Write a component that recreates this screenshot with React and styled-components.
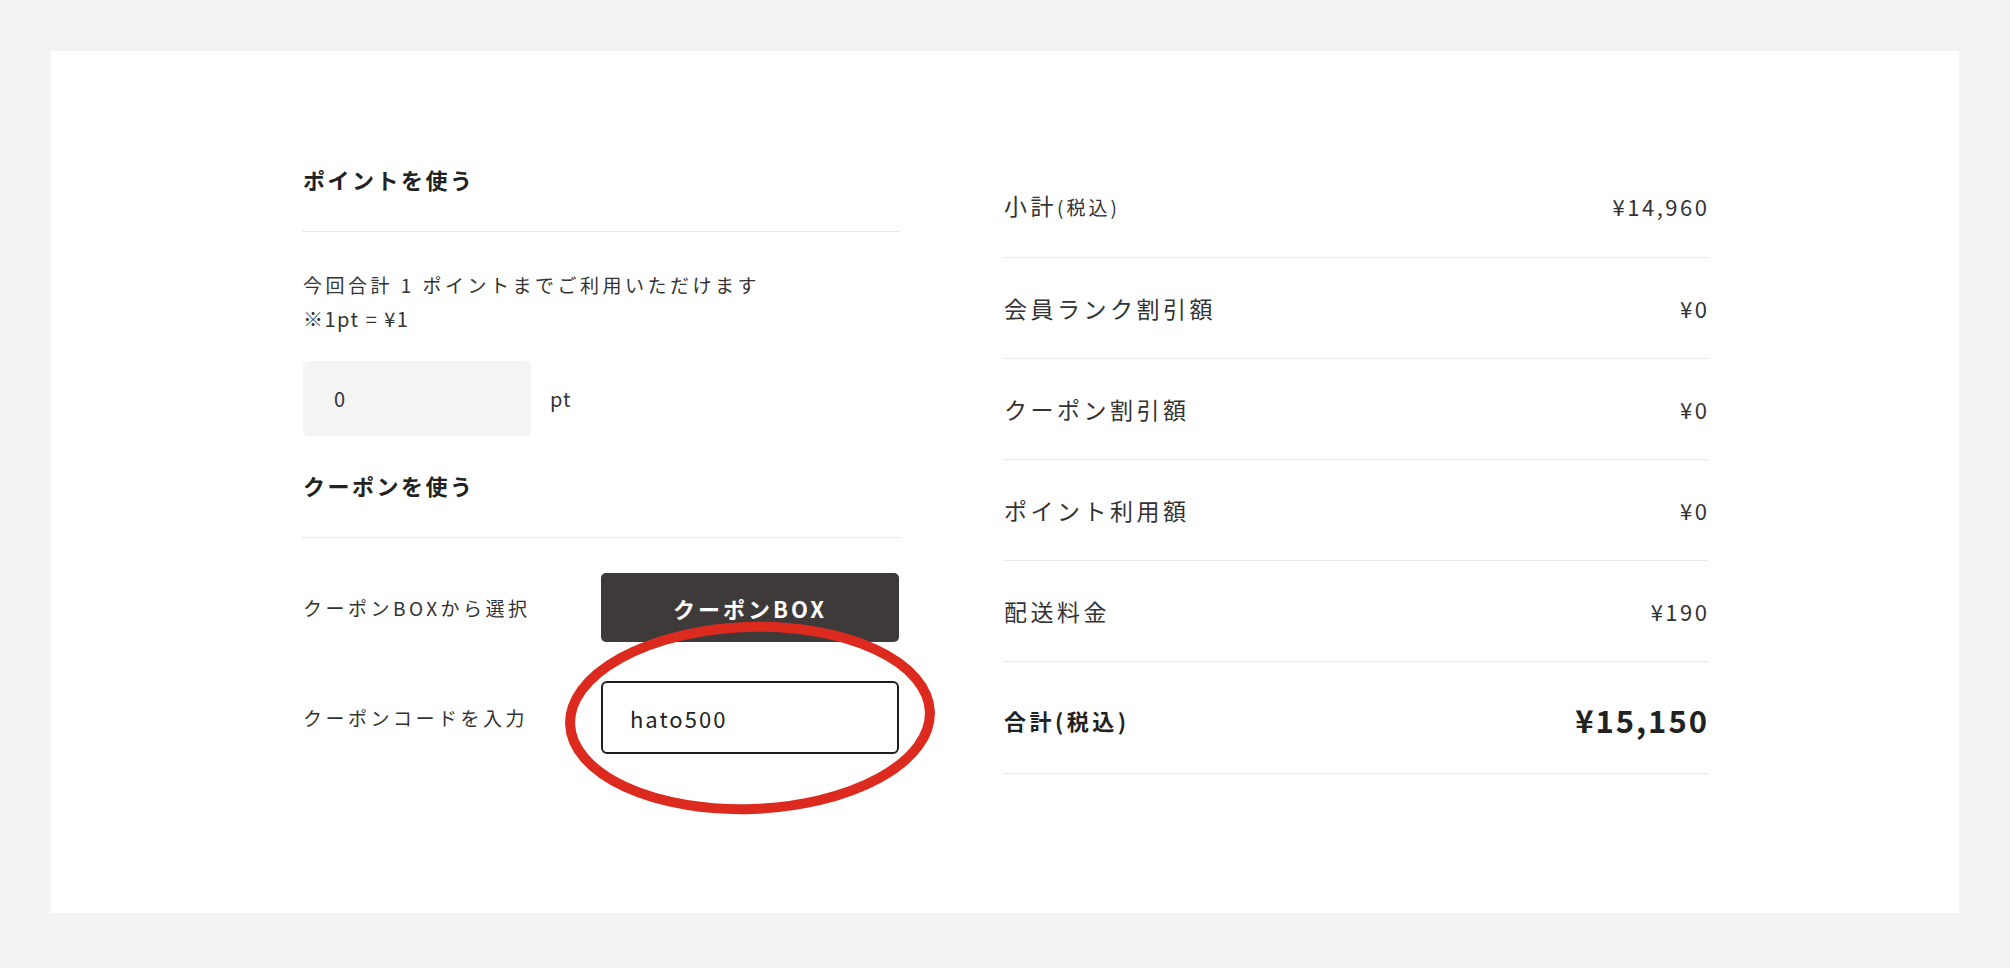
import React from "react";
import styled, { createGlobalStyle } from "styled-components";

const GlobalStyle = createGlobalStyle`
  html, body { margin: 0; padding: 0; }
  body {
    background: #f3f3f3;
    font-family: "Noto Sans CJK JP", "Noto Sans", sans-serif;
    color: #333;
  }
`;

const Page = styled.div`
  padding: 51px;
  min-height: 968px;
  box-sizing: border-box;
`;

const Card = styled.div`
  background: #fff;
  padding: 104px 0 139px;
  display: flex;
  justify-content: center;
  gap: 105px;
`;

const LeftCol = styled.div`
  width: 596px;
  padding-top: 9px;
  display: flex;
  flex-direction: column;
`;

const Heading = styled.h3`
  margin: ${(p) => p.$mt || 0}px 0 0;
  padding: 0 0 37px;
  font-size: 22px;
  line-height: 30px;
  font-weight: 700;
  letter-spacing: 2.5px;
  color: #222;
  border-bottom: 1px dotted #d2d2d2;
`;

const Note = styled.p`
  margin: 36px 0 0;
  font-size: 19px;
  line-height: 34px;
  letter-spacing: 3.5px;
  color: #333;
`;

const Rate = styled.span`
  font-size: 20px;
  letter-spacing: 1.5px;
`;

const PointRow = styled.div`
  margin-top: 25px;
  display: flex;
  align-items: center;
  gap: 19px;
`;

const PointInput = styled.div`
  width: 228px;
  height: 75px;
  box-sizing: border-box;
  background: #f4f4f4;
  border-radius: 6px;
  padding-left: 31px;
  display: flex;
  align-items: center;
  font-size: 20px;
  color: #333;
`;

const Unit = styled.span`
  font-size: 20px;
  letter-spacing: 1px;
  color: #333;
`;

const FieldRow = styled.div`
  margin-top: ${(p) => p.$mt}px;
  display: grid;
  grid-template-columns: 298px 298px;
  align-items: center;
`;

const FieldLabel = styled.span`
  font-size: 19px;
  letter-spacing: 3.5px;
  color: #333;
`;

const BoxButton = styled.button`
  height: 69px;
  border: none;
  border-radius: 5px;
  background: #3e3a39;
  color: #fff;
  font-family: inherit;
  font-size: 22px;
  font-weight: 700;
  letter-spacing: 3px;
  padding: 0;
`;

const CodeWrap = styled.div`
  position: relative;
`;

const CodeInput = styled.div`
  height: 73px;
  box-sizing: border-box;
  border: 2px solid #1e1e1e;
  border-radius: 6px;
  padding-left: 27px;
  display: flex;
  align-items: center;
  font-size: 22px;
  letter-spacing: 2px;
  color: #222;
`;

const Annotation = styled.svg`
  position: absolute;
  left: 50%;
  top: 50%;
  width: 380px;
  height: 204px;
  transform: translate(-50%, -50%) rotate(-2deg);
  pointer-events: none;
  overflow: visible;
`;

const RightCol = styled.div`
  width: 703px;
  display: flex;
  flex-direction: column;
`;

const SumRow = styled.div`
  display: flex;
  justify-content: space-between;
  align-items: center;
  padding: ${(p) => (p.$total ? "38px 0 33px" : "33px 0 33px")};
  border-bottom: 1px dotted #d2d2d2;
`;

const SumLabel = styled.span`
  font-size: ${(p) => (p.$bold ? 22 : 23)}px;
  line-height: 34px;
  letter-spacing: 3.5px;
  font-weight: ${(p) => (p.$bold ? 700 : 400)};
  color: ${(p) => (p.$bold ? "#222" : "#333")};
`;

const Small = styled.span`
  font-size: 19px;
  letter-spacing: 3px;
`;

const SumValue = styled.span`
  font-size: ${(p) => (p.$big ? 31 : 22)}px;
  line-height: ${(p) => (p.$big ? 40 : 34)}px;
  letter-spacing: ${(p) => (p.$big ? 2 : 2.5)}px;
  font-weight: ${(p) => (p.$big ? 700 : 400)};
  color: ${(p) => (p.$big ? "#222" : "#333")};
  margin-right: ${(p) => (p.$big ? -2 : -2.5)}px;
`;

const rows = [
  { label: "小計", small: "(税込)", value: "¥14,960" },
  { label: "会員ランク割引額", value: "¥0" },
  { label: "クーポン割引額", value: "¥0" },
  { label: "ポイント利用額", value: "¥0" },
  { label: "配送料金", value: "¥190" },
];

export default function App() {
  return (
    <>
      <GlobalStyle />
      <Page>
        <Card>
          <LeftCol>
            <Heading>ポイントを使う</Heading>
            <Note>
              今回合計 1 ポイントまでご利用いただけます
              <br />
              <Rate>※1pt = ¥1</Rate>
            </Note>
            <PointRow>
              <PointInput>0</PointInput>
              <Unit>pt</Unit>
            </PointRow>
            <Heading $mt={34}>クーポンを使う</Heading>
            <FieldRow $mt={35}>
              <FieldLabel>クーポンBOXから選択</FieldLabel>
              <BoxButton>クーポンBOX</BoxButton>
            </FieldRow>
            <FieldRow $mt={39}>
              <FieldLabel>クーポンコードを入力</FieldLabel>
              <CodeWrap>
                <CodeInput>hato500</CodeInput>
                <Annotation viewBox="0 0 380 204">
                  <ellipse
                    cx="190"
                    cy="102"
                    rx="180"
                    ry="91"
                    fill="none"
                    stroke="#dc2a1f"
                    strokeWidth="10"
                  />
                </Annotation>
              </CodeWrap>
            </FieldRow>
          </LeftCol>
          <RightCol>
            {rows.map((r) => (
              <SumRow key={r.label}>
                <SumLabel>
                  {r.label}
                  {r.small && <Small>{r.small}</Small>}
                </SumLabel>
                <SumValue>{r.value}</SumValue>
              </SumRow>
            ))}
            <SumRow $total>
              <SumLabel $bold>合計(税込)</SumLabel>
              <SumValue $big>¥15,150</SumValue>
            </SumRow>
          </RightCol>
        </Card>
      </Page>
    </>
  );
}
